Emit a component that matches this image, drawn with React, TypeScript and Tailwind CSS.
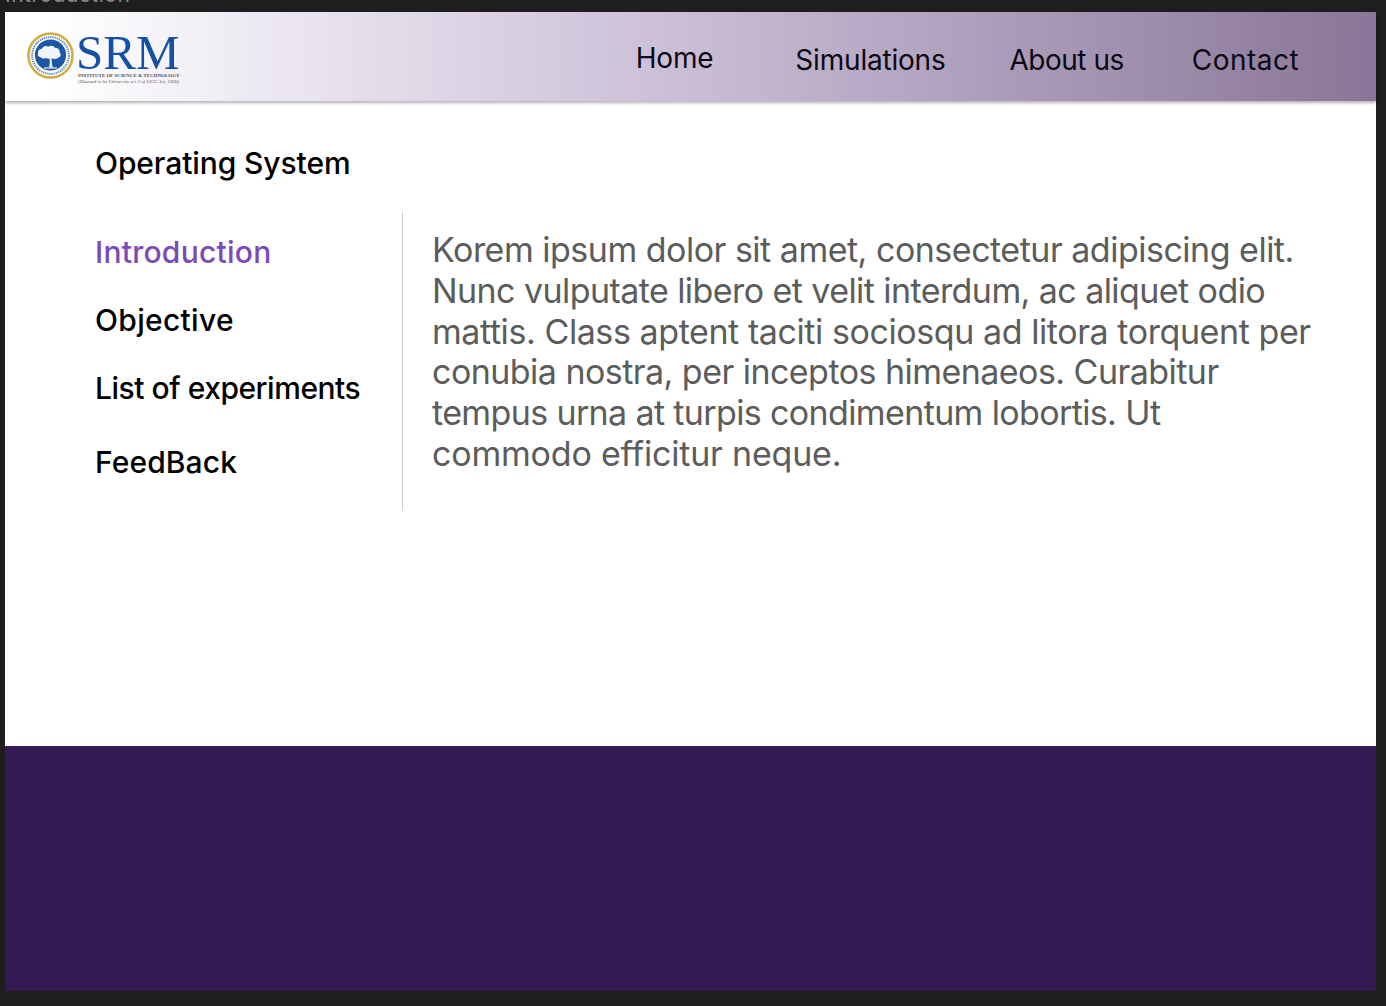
const navClass = "text-[28px] leading-[34px] text-[#0b0914] tracking-[-0.2px]";
const sideClass = "text-[30px] leading-[36px] font-medium";

function Seal() {
  return (
    <svg width="47" height="47" viewBox="0 0 47 47" className="shrink-0 -mt-[8px]">
      <circle cx="23.5" cy="23.5" r="22" fill="#fff" stroke="#cfae45" strokeWidth="2.6" />
      <circle cx="23.5" cy="23.5" r="18.4" fill="none" stroke="#5f82bd" strokeWidth="2" strokeDasharray="1.3 0.9" />
      <circle cx="23.5" cy="23" r="15.6" fill="#1c56a6" />
      <path d="M22 35.5c.9-3.2 1-6.6.5-10h2.4c-.4 3.4-.2 6.8 1 10z" fill="#eef2f8" />
      <path d="M11.2 21.8c-.8-2.8 1.2-5 3.6-4.7.8-2.7 4.3-3.9 6.6-2.3 2.1-1.7 5.5-1.1 6.7 1.2 2.9-.4 5 1.9 4.5 4.5 2 1.7 1.2 4.8-1.5 5.2-1.6 1.7-4.4 1.8-6 .4-1.8 1.1-4.2 1-5.8-.2-1.9 1.2-4.7.7-5.9-1-2 0-3.3-1.8-2.2-3.1z" fill="#f2f5fa" />
      <path d="M17 36h13" stroke="#eef2f8" strokeWidth="1.2" />
    </svg>
  );
}

function Logo() {
  return (
    <div className="flex items-center gap-[2px]">
      <Seal />
      <div className="flex flex-col font-['Liberation_Serif',serif]">
        <span className="text-[49px] leading-[38px] h-[38px] text-[#1450a3]">SRM</span>
        <span className="text-[5px] leading-[6px] mt-[1px] pl-[2px] font-bold text-[#4a4a55] whitespace-nowrap">INSTITUTE OF SCIENCE &amp; TECHNOLOGY</span>
        <span className="text-[5px] leading-[6px] pl-[2px] italic text-[#55555f] whitespace-nowrap">(Deemed to be University u/s 3 of UGC Act, 1956)</span>
      </div>
    </div>
  );
}

export default function App() {
  return (
    <div className="h-[1006px] w-[1386px] overflow-hidden bg-[#1e1e1e] pl-[5px] pr-[10px] font-['Inter',sans-serif] flex flex-col">
      <div className="h-[12px] overflow-hidden shrink-0">
        <p className="-mt-[21px] text-[21px] leading-[32px] text-[#8a8a8a] tracking-[0.5px]">Introduction</p>
      </div>

      <header className="h-[89px] shrink-0 flex items-center pl-[22px] bg-gradient-to-r from-white from-[3%] via-[#c9bdd6] via-[50%] to-[#8a7698] shadow-[0_2px_3px_rgba(0,0,0,0.3)] relative z-10">
        <div className="pt-[6px]"><Logo /></div>
        <nav className="flex items-center ml-[456px] mt-[8px]">
          <a className={`${navClass} -mt-[5px]`}>Home</a>
          <a className={`${navClass} ml-[82px] -mt-[1px]`}>Simulations</a>
          <a className={`${navClass} ml-[64px] -mt-[1px] tracking-[-0.5px]`}>About us</a>
          <a className={`${navClass} ml-[68px] -mt-[1px] tracking-[0.5px]`}>Contact</a>
        </nav>
      </header>

      <main className="h-[645px] shrink-0 bg-white pl-[90px] pt-[44px]">
        <h1 className={`${sideClass} text-black tracking-[-0.1px]`}>Operating System</h1>
        <div className="flex mt-[30px]">
          <ul className="w-[308px] h-[300px] border-r border-[#cfcfcf] pt-[23px] shrink-0">
            <li className={`${sideClass} text-[#7a4bb8] tracking-[0.25px]`}>Introduction</li>
            <li className={`${sideClass} text-black mt-[32px] tracking-[0.3px]`}>Objective</li>
            <li className={`${sideClass} text-black mt-[32px] tracking-[-0.47px]`}>List of experiments</li>
            <li className={`${sideClass} text-black mt-[38px] tracking-[0.1px]`}>FeedBack</li>
          </ul>
          <div className="ml-[29px] w-[900px] pt-[19px] text-[34px] leading-[40.8px] text-[#5c5c5c]">
            <p className="tracking-[-0.5px]">Korem ipsum dolor sit amet, consectetur adipiscing elit.</p>
            <p className="tracking-[-0.57px]">Nunc vulputate libero et velit interdum, ac aliquet odio</p>
            <p className="tracking-[-0.42px]">mattis. Class aptent taciti sociosqu ad litora torquent per</p>
            <p className="tracking-[-0.54px]">conubia nostra, per inceptos himenaeos. Curabitur</p>
            <p className="tracking-[-0.63px]">tempus urna at turpis condimentum lobortis. Ut</p>
            <p className="tracking-[-0.2px]">commodo efficitur neque.</p>
          </div>
        </div>
      </main>

      <footer className="h-[245px] shrink-0 bg-[#331a52]" />
    </div>
  );
}
